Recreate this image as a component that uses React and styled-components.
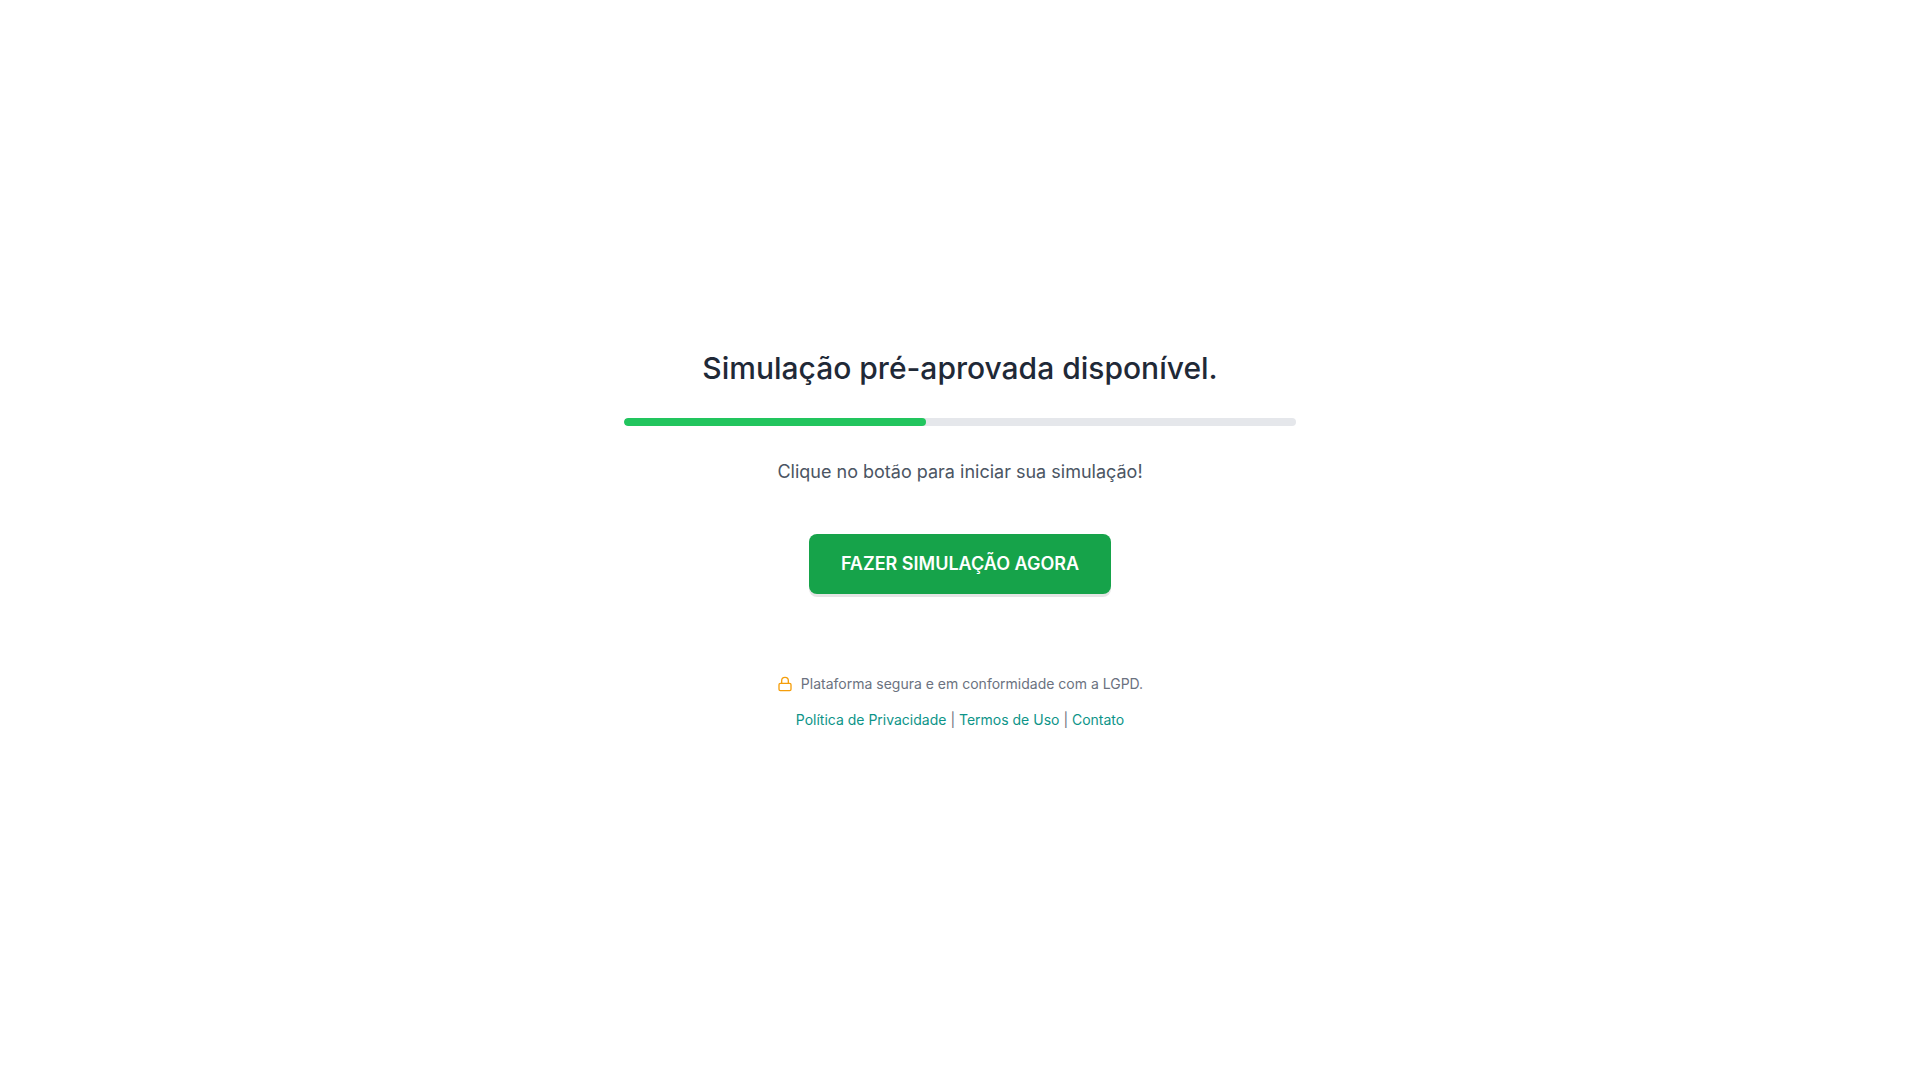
import React from 'react';
import styled, { createGlobalStyle } from 'styled-components';
import { Lock } from 'lucide-react';

const GlobalStyle = createGlobalStyle`
    *{
        box-sizing: border-box;
    }
    body{
        margin: 0;
        background: #ffffff;
        color: #1f2937;
        font-family: Inter, "Liberation Sans", sans-serif;
    }
`;
const Page = styled.main`
    min-height: 100vh;
    padding: 16px;
    display: flex;
    align-items: center;
    justify-content: center;
`;
const Content = styled.div`
    width: 100%;
    max-width: 672px;
    display: flex;
    flex-direction: column;
    align-items: center;
    text-align: center;
`;
const Title = styled.h1`
    margin: 0 0 32px;
    font-size: 30px;
    font-weight: 500;
    line-height: 36px;
`;
const Track = styled.div`
    width: 100%;
    height: 8px;
    margin-bottom: 32px;
    border-radius: 4px;
    background: #e5e7eb;
    overflow: hidden;
`;
const Fill = styled.div`
    width: ${(props) => props.$value}%;
    height: 100%;
    border-radius: 4px;
    background: #22c55e;
`;
const Text = styled.p`
    margin: 0 0 48px;
    color: #4b5563;
    font-size: 18px;
    line-height: 28px;
`;
const StartButton = styled.button`
    padding: 16px 32px;
    border: none;
    border-radius: 8px;
    background: #16a34a;
    box-shadow: 0 3px 0 rgba(0,0,0,0.1);
    color: white;
    font-family: inherit;
    font-size: 18px;
    font-weight: 600;
    line-height: 28px;
    cursor: pointer;
    &:hover{
        background: #15803d;
    }
`;
const Footer = styled.footer`
    margin-top: 80px;
    display: flex;
    flex-direction: column;
    align-items: center;
    gap: 16px;
    color: #6b7280;
    font-size: 14px;
    line-height: 20px;
`;
const Secure = styled.div`
    display: flex;
    align-items: center;
    gap: 8px;
    svg{
        flex-shrink: 0;
        color: #f59e0b;
    }
`;
const FooterLink = styled.a`
    color: #0d9488;
    text-decoration: none;
    &:hover{
        text-decoration: underline;
    }
`;

const App = () => {

    const progress = 45;

  return (<>
    <GlobalStyle />
    <Page>
        <Content>
            <Title>Simulação pré-aprovada disponível.</Title>
            <Track role="progressbar" aria-label="Progresso" aria-valuenow={progress} aria-valuemin={0} aria-valuemax={100}>
                <Fill $value={progress} />
            </Track>
            <Text>Clique no botão para iniciar sua simulação!</Text>
            <StartButton type="button">FAZER SIMULAÇÃO AGORA</StartButton>
            <Footer>
                <Secure>
                    <Lock size={16} aria-hidden="true" />
                    <span>Plataforma segura e em conformidade com a LGPD.</span>
                </Secure>
                <nav>
                    <FooterLink href="#privacidade">Política de Privacidade</FooterLink>
                    {' | '}
                    <FooterLink href="#termos">Termos de Uso</FooterLink>
                    {' | '}
                    <FooterLink href="#contato">Contato</FooterLink>
                </nav>
            </Footer>
        </Content>
    </Page>
    </>
  );
}

export default App
